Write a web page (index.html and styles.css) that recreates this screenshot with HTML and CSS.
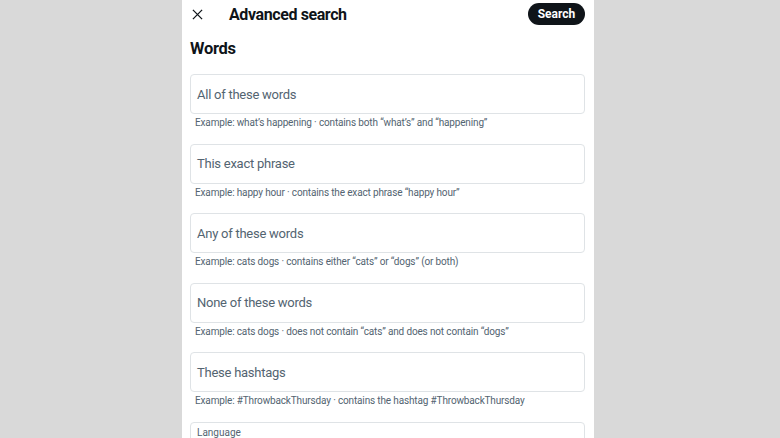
FILE: index.html
```html
<!DOCTYPE html>
<html>
<head>
<meta charset="utf-8">
<link rel="stylesheet" href="styles.css">
</head>
<body>
<div class="panel">
  <header class="topbar">
    <div class="close">
      <svg width="11" height="11" viewBox="0 0 12 12"><path d="M1 1L11 11M11 1L1 11" stroke="#0f1419" stroke-width="1.4" fill="none"/></svg>
    </div>
    <h1 class="title">Advanced search</h1>
    <button class="search-btn">Search</button>
  </header>
  <h2 class="section">Words</h2>
  <div class="field">
    <div class="box"><span class="ph">All of these words</span></div>
    <div class="hint">Example: what’s happening · contains both “what’s” and “happening”</div>
  </div>
  <div class="field">
    <div class="box"><span class="ph">This exact phrase</span></div>
    <div class="hint">Example: happy hour · contains the exact phrase “happy hour”</div>
  </div>
  <div class="field">
    <div class="box"><span class="ph">Any of these words</span></div>
    <div class="hint">Example: cats dogs · contains either “cats” or “dogs” (or both)</div>
  </div>
  <div class="field">
    <div class="box"><span class="ph">None of these words</span></div>
    <div class="hint">Example: cats dogs · does not contain “cats” and does not contain “dogs”</div>
  </div>
  <div class="field">
    <div class="box"><span class="ph">These hashtags</span></div>
    <div class="hint">Example: #ThrowbackThursday · contains the hashtag #ThrowbackThursday</div>
  </div>
  <div class="field">
    <div class="box select"><span class="lbl">Language</span></div>
  </div>
</div>
</body>
</html>
```
FILE: styles.css
```css
html, body {
  margin: 0;
  padding: 0;
  height: 100%;
  overflow: hidden;
}
body {
  background: #d9d9d9;
  font-family: Roboto, "Liberation Sans", sans-serif;
  color: #0f1419;
}
.panel {
  margin-left: 182px;
  width: 412px;
  height: 438px;
  background: #ffffff;
  box-sizing: border-box;
  padding: 0 9px 0 8px;
  overflow: hidden;
}
.topbar {
  display: flex;
  align-items: center;
  height: 28px;
}
.close {
  width: 39px;
  display: flex;
  align-items: center;
  padding-left: 2px;
  box-sizing: border-box;
}
.close svg { display: block; }
.title {
  margin: 0;
  font-size: 16px;
  letter-spacing: -0.4px;
  font-weight: 700;
  flex: 1;
}
.search-btn {
  border: none;
  background: #0f1419;
  color: #fff;
  font-family: inherit;
  font-weight: 700;
  font-size: 12px;
  height: 22px;
  width: 57px;
  border-radius: 11px;
  padding: 0;
}
.section {
  margin: 10px 0 0 0;
  font-size: 16.5px;
  letter-spacing: -0.3px;
  font-weight: 700;
  height: 26px;
  line-height: 22px;
}
.field {
  margin-top: 10px;
  height: 59.5px;
}
.box {
  height: 40px;
  box-sizing: border-box;
  border: 1px solid #dfe3e6;
  border-radius: 4px;
  display: flex;
  align-items: center;
  padding-left: 6px;
}
.ph {
  font-size: 13px;
  letter-spacing: -0.25px;
  color: #536471;
}
.hint {
  font-size: 10px;
  letter-spacing: -0.15px;
  color: #536471;
  padding-left: 5px;
  margin-top: 2px;
  line-height: 14px;
}
.select {
  align-items: flex-start;
  padding-top: 4px;
}
.lbl {
  font-size: 10px;
  line-height: 12px;
  color: #536471;
}
```
